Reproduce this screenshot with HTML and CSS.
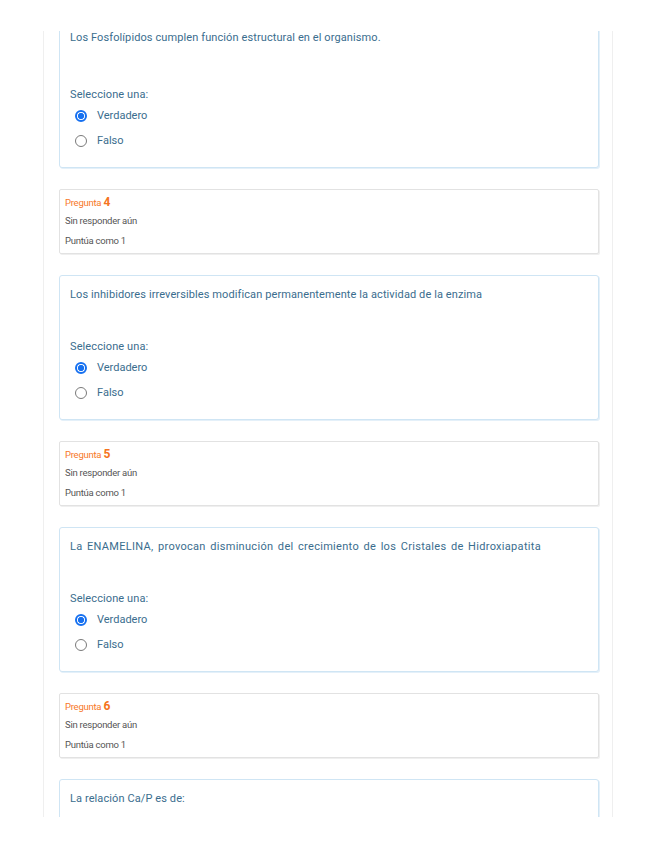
FILE: index.html
```html
<!DOCTYPE html>
<html lang="es">
<head>
<meta charset="utf-8">
<title>Cuestionario</title>
<link rel="stylesheet" href="styles.css">
</head>
<body>
<main class="viewport">
  <div class="list">
    <section class="qcard first">
      <div class="qtext tight">Los Fosfolípidos cumplen función estructural en el organismo.</div>
      <div class="prompt">Seleccione una:</div>
      <div class="opt"><span class="radio checked"></span><span>Verdadero</span></div>
      <div class="opt"><span class="radio"></span><span>Falso</span></div>
    </section>

    <section class="info">
      <div class="qno">Pregunta <b>4</b></div>
      <div class="state">Sin responder aún</div>
      <div class="grade">Puntúa como 1</div>
    </section>

    <section class="qcard">
      <div class="qtext">Los inhibidores irreversibles modifican permanentemente la actividad de la enzima</div>
      <div class="prompt">Seleccione una:</div>
      <div class="opt"><span class="radio checked"></span><span>Verdadero</span></div>
      <div class="opt"><span class="radio"></span><span>Falso</span></div>
    </section>

    <section class="info">
      <div class="qno">Pregunta <b>5</b></div>
      <div class="state">Sin responder aún</div>
      <div class="grade">Puntúa como 1</div>
    </section>

    <section class="qcard">
      <div class="qtext wide">La ENAMELINA, provocan disminución del crecimiento de los Cristales de Hidroxiapatita</div>
      <div class="prompt">Seleccione una:</div>
      <div class="opt"><span class="radio checked"></span><span>Verdadero</span></div>
      <div class="opt"><span class="radio"></span><span>Falso</span></div>
    </section>

    <section class="info">
      <div class="qno">Pregunta <b>6</b></div>
      <div class="state">Sin responder aún</div>
      <div class="grade">Puntúa como 1</div>
    </section>

    <section class="qcard">
      <div class="qtext">La relación Ca/P es de:</div>
    </section>
  </div>
</main>
</body>
</html>
```

FILE: styles.css
```css
html, body {
  margin: 0;
  padding: 0;
  background: #ffffff;
}

body {
  font-family: Roboto, "Liberation Sans", sans-serif;
}

.viewport {
  box-sizing: border-box;
  margin: 31px 0 0 43px;
  width: 570px;
  height: 786px;
  overflow: hidden;
  border-left: 1px solid #efefef;
  border-right: 1px solid #efefef;
  padding: 0 13px 0 15px;
}

.list {
  display: flex;
  flex-direction: column;
  gap: 21px;
  margin-top: -8px;
}

.qcard {
  box-sizing: border-box;
  height: 145px;
  flex: none;
  border: 1px solid #cfe5f4;
  border-radius: 3px;
  box-shadow: 1px 1px 0 #e4f0f9;
  background: #ffffff;
  padding: 11px 10px 14px 10px;
  color: #3a6d8e;
  font-size: 11px;
  letter-spacing: 0.1px;
}

.qtext {
  line-height: 16px;
  height: 16px;
  margin-bottom: 36px;
}

.qtext.wide {
  word-spacing: 1.5px;
  letter-spacing: 0.3px;
}

.qtext.tight {
  margin-top: -5px;
  margin-bottom: 41px;
}

.prompt {
  line-height: 16px;
  height: 16px;
}

.opt {
  display: flex;
  align-items: center;
  gap: 10px;
  height: 25px;
  padding-left: 5px;
  letter-spacing: 0;
}

.radio {
  box-sizing: border-box;
  width: 12px;
  height: 12px;
  border-radius: 50%;
  border: 1.5px solid #7a7a7a;
  background: #ffffff;
  flex: none;
}

.radio.checked {
  border: 2px solid #1670f0;
  background: radial-gradient(circle, #1670f0 0 2.8px, #ffffff 3.4px);
}

.info {
  box-sizing: border-box;
  height: 65px;
  flex: none;
  border: 1px solid #e2e2e2;
  border-radius: 2px;
  box-shadow: 1px 1px 0 #efefef;
  background: #ffffff;
  padding: 4px 5px 0 5px;
  color: #555555;
  font-size: 9.5px;
  letter-spacing: -0.25px;
}

.qno {
  height: 16px;
  line-height: 16px;
  color: #f7782a;
  margin-bottom: 3px;
}

.qno b {
  font-size: 12px;
  font-weight: 700;
  letter-spacing: 0;
  color: #f57420;
}

.state {
  height: 16px;
  line-height: 16px;
  margin-bottom: 4px;
}

.grade {
  height: 16px;
  line-height: 16px;
}
```
